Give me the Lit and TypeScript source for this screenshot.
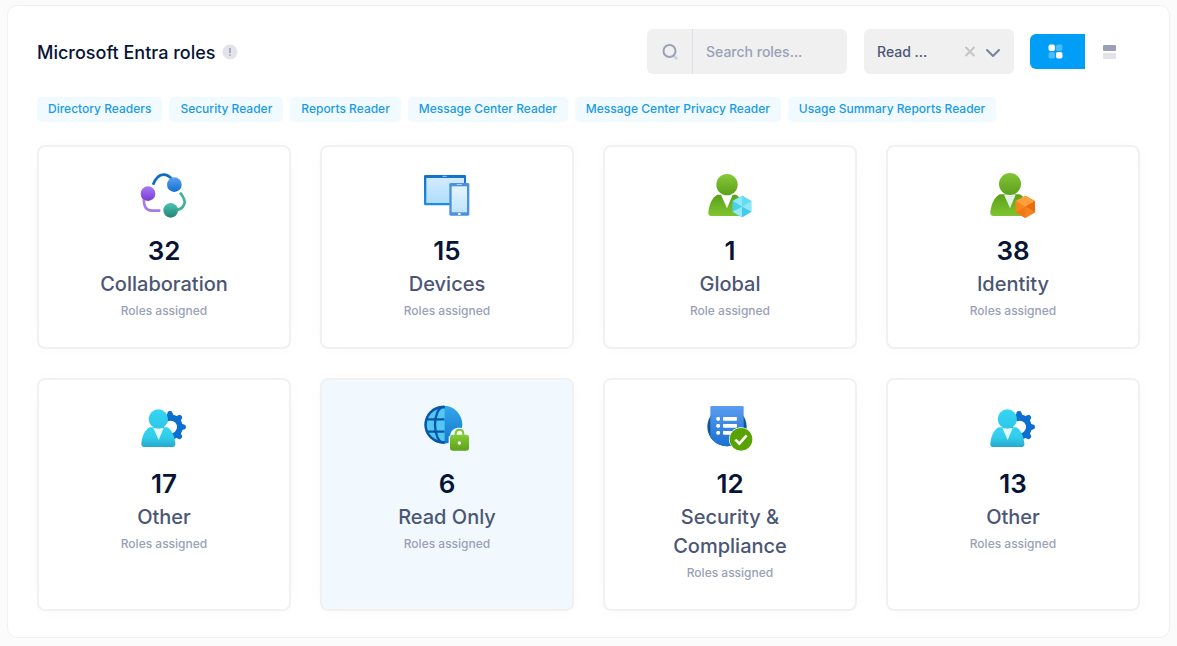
import { LitElement, html, css, svg, TemplateResult } from "lit";
import { customElement, property, state } from "lit/decorators.js";

const gear = Array.from(
  { length: 8 },
  (_, i) => svg`<path d="M109 68l4-13q1-4 7-4t7 4l4 13z" fill="#0c6fd0" transform="rotate(${i * 45} 120 99)" />`
);

const icons: Record<string, TemplateResult> = {
  collaboration: html`<svg viewBox="30 33 144 144" width="48" height="48" aria-hidden="true">
    <defs>
      <linearGradient id="a" x2="0" y2="1"><stop stop-color="#5ea0ef" /><stop offset="1" stop-color="#0f6fd0" /></linearGradient>
      <linearGradient id="b" x2="0" y2="1"><stop stop-color="#a67af4" /><stop offset="1" stop-color="#7a3ad6" /></linearGradient>
      <linearGradient id="c" x2="0" y2="1"><stop stop-color="#49c5b1" /><stop offset="1" stop-color="#258277" /></linearGradient>
    </defs>
    <g fill="none" stroke-width="8">
      <path d="M69 74C76 57 84 45 99 44c10-1 18 4 26 12" stroke="#0b6fc8" />
      <path d="M42 113c-2 22 4 39 24 39h25" stroke="#a57be6" />
      <path d="M150 98c10 12 17 22 13 34-4 11-14 18-28 18" stroke="#3fb396" />
    </g>
    <circle cx="133" cy="74" r="22" fill="url(#a)" />
    <circle cx="54" cy="101" r="22" fill="url(#b)" />
    <circle cx="122" cy="151" r="22" fill="url(#c)" />
  </svg>`,
  devices: html`<svg viewBox="33 33 144 144" width="48" height="48" aria-hidden="true">
    <defs>
      <linearGradient id="a" x2="0" y2="1"><stop stop-color="#d2ebff" /><stop offset="1" stop-color="#b0dcfc" /></linearGradient>
      <linearGradient id="b" x2="0" y2="1"><stop stop-color="#e4f5ff" /><stop offset="1" stop-color="#bfe4fd" /></linearGradient>
      <linearGradient id="c" x2="0" y2="1"><stop stop-color="#1173c6" /><stop offset="1" stop-color="#1b8fe2" /></linearGradient>
    </defs>
    <rect x="36" y="45" width="126" height="91" rx="4" fill="url(#c)" />
    <rect x="43" y="54" width="113" height="75" fill="url(#a)" />
    <rect x="91" y="47" width="14" height="4" rx="2" fill="#79bdf0" />
    <rect x="112" y="69" width="60" height="98" rx="4" fill="#4b90dd" />
    <rect x="119" y="79" width="46" height="78" fill="url(#b)" />
    <rect x="134" y="72" width="16" height="3" rx="1" fill="#a7d4f8" />
    <rect x="138" y="159" width="8" height="6" rx="2" fill="#fff" />
  </svg>`,
  global: html`<svg viewBox="33 33 144 144" width="48" height="48" aria-hidden="true">
    <defs>
      <linearGradient id="a" x2="0" y2="1"><stop stop-color="#86c938" /><stop offset="1" stop-color="#5da01b" /></linearGradient>
      <linearGradient id="b" x2="0" y2="1"><stop stop-color="#5c9f1c" /><stop offset="1" stop-color="#7fc52f" /></linearGradient>
    </defs>
    <path d="M50 168c-7 0-11-4-10-11 3-27 12-45 27-53h56c13 7 22 26 25 53 1 7-3 11-10 11z" fill="url(#b)" />
    <path d="M78 104h35l-17 41z" fill="#fff" />
    <circle cx="96" cy="74" r="34" fill="#fff" />
    <circle cx="96" cy="74" r="32" fill="url(#a)" />
    <path d="M141 107l28 16v32l-28 17-28-17v-32z" fill="#54d8f0" />
    <path d="M141 107v33l-28-17z" fill="#8be9fa" />
    <path d="M141 107v33l28-17z" fill="#63dcf1" />
    <path d="M113 123l28 17-28 15z" fill="#48cfe9" />
    <path d="M169 123l-28 17 28 15z" fill="#8ee8f8" />
    <path d="M113 155l28-15v32z" fill="#94eafa" />
    <path d="M169 155l-28-15v32z" fill="#45c9e4" />
  </svg>`,
  identity: html`<svg viewBox="33 33 144 144" width="48" height="48" aria-hidden="true">
    <defs>
      <linearGradient id="a" x2="0" y2="1"><stop stop-color="#83c536" /><stop offset="1" stop-color="#5c9f1c" /></linearGradient>
      <linearGradient id="b" x2="0" y2="1"><stop stop-color="#5c9f1c" /><stop offset="1" stop-color="#7fc52f" /></linearGradient>
    </defs>
    <path d="M47 168c-7 0-11-4-10-11 3-27 13-46 28-54h61c14 8 23 27 26 54 1 7-3 11-10 11z" fill="url(#b)" />
    <path d="M78 104h35l-17 41z" fill="#dff3e4" />
    <circle cx="96" cy="72" r="34" fill="#fff" />
    <circle cx="96" cy="72" r="33" fill="url(#a)" />
    <path d="M142 107l29 16v34l-29 17-29-17v-34z" fill="#f78d1e" />
    <path d="M142 107l29 16-29 17-29-17z" fill="#fba03a" />
    <path d="M142 140l29-17v34z" fill="#ec6a10" />
    <path d="M142 140v34l29-17z" fill="#f58220" />
    <path d="M113 123l29 17-29 17z" fill="#f7871b" />
    <path d="M113 157l29-17v34z" fill="#f07818" />
  </svg>`,
  other: html`<svg viewBox="30 30 144 144" width="48" height="48" aria-hidden="true">
    <defs>
      <linearGradient id="a" x2="0" y2="1"><stop stop-color="#35d6f3" /><stop offset="1" stop-color="#2fc6ea" /></linearGradient>
      <linearGradient id="b" x2="0" y2="1"><stop stop-color="#35d4f2" /><stop offset=".5" stop-color="#32cdec" /><stop offset="1" stop-color="#27a9cf" /></linearGradient>
    </defs>
    ${gear}
    <circle cx="120" cy="99" r="28" fill="none" stroke="#0c6fd0" stroke-width="20" />
    <circle cx="122" cy="99" r="19" fill="#fff" />
    <path d="M43 159c-7 0-10-4-9-11 3-25 11-40 25-48h53c13 8 21 23 24 48 1 7-2 11-9 11z" fill="url(#b)" />
    <path d="M70 102h31l-15 36z" fill="#e2f9fd" />
    <circle cx="85" cy="75" r="29" fill="url(#a)" />
  </svg>`,
  readonly: html`<svg viewBox="33 30 144 144" width="48" height="48" aria-hidden="true">
    <defs>
      <linearGradient id="a" x2="0" y2="1"><stop stop-color="#35a7e8" /><stop offset="1" stop-color="#0f78cf" /></linearGradient>
      <linearGradient id="b" x2="0" y2="1"><stop stop-color="#85cb35" /><stop offset="1" stop-color="#5ca21b" /></linearGradient>
      <clipPath id="c"><path d="M98 30H30v130h68z" /></clipPath>
    </defs>
    <circle cx="94" cy="92" r="57" fill="url(#a)" />
    <g clip-path="url(#c)">
      <circle cx="94" cy="92" r="54" fill="#50c8f2" />
      <g fill="none" stroke="#0a57a8" stroke-width="7">
        <circle cx="94" cy="92" r="53" />
        <ellipse cx="94" cy="92" rx="25" ry="53" />
        <path d="M44 76h54M44 113h54" />
      </g>
    </g>
    <path d="M115 124c0-30 54-30 54 0l7 4v46h-66v-46z" fill="#f1f9ff" />
    <path d="M131 126v-6c0-17 23-17 23 0v6" fill="none" stroke="#7fc531" stroke-width="6" />
    <rect x="114" y="122" width="57" height="48" rx="9" fill="url(#b)" />
    <circle cx="142" cy="147" r="5" fill="#fff" />
  </svg>`,
  security: html`<svg viewBox="33 30 144 144" width="48" height="48" aria-hidden="true">
    <defs>
      <linearGradient id="a" x2="0" y2="1"><stop stop-color="#5a9df0" /><stop offset="1" stop-color="#1a70d2" /></linearGradient>
    </defs>
    <circle cx="96" cy="98" r="59" fill="#0b5798" />
    <path d="M46 40q0-4 4-4h92q4 0 4 4v89a59 59 0 0 1-100 0z" fill="url(#a)" />
    <g fill="#fff">
      <rect x="64" y="69" width="11" height="11" rx="4" /><rect x="84" y="69" width="42" height="11" rx="2" />
      <rect x="64" y="90" width="11" height="11" rx="4" /><rect x="84" y="90" width="42" height="11" rx="2" />
      <rect x="64" y="111" width="11" height="11" rx="4" /><rect x="84" y="111" width="42" height="11" rx="2" />
    </g>
    <circle cx="138" cy="136" r="36" fill="#fff" />
    <circle cx="138" cy="136" r="34" fill="#57a300" />
    <path d="M121 137l12 12 22-25" fill="none" stroke="#fff" stroke-width="8" />
  </svg>`,
};

interface Category {
  icon: string;
  count: number;
  name: string;
}

const categories: Category[] = [
  { icon: "collaboration", count: 32, name: "Collaboration" },
  { icon: "devices", count: 15, name: "Devices" },
  { icon: "global", count: 1, name: "Global" },
  { icon: "identity", count: 38, name: "Identity" },
  { icon: "other", count: 17, name: "Other" },
  { icon: "readonly", count: 6, name: "Read Only" },
  { icon: "security", count: 12, name: "Security & Compliance" },
  { icon: "other", count: 13, name: "Other" },
];

const roles = [
  "Directory Readers",
  "Security Reader",
  "Reports Reader",
  "Message Center Reader",
  "Message Center Privacy Reader",
  "Usage Summary Reports Reader",
];

@customElement("role-card")
class RoleCard extends LitElement {
  @property({ attribute: false }) category!: Category;
  @property({ type: Boolean, reflect: true }) selected = false;

  static styles = css`
    :host {
      display: flex;
      flex-direction: column;
      align-items: center;
      box-sizing: border-box;
      padding: 24px 40px 26px;
      border: 2px solid #f1f1f2;
      border-radius: 8px;
      background: #fff;
      box-shadow: 0 0 20px rgba(76, 87, 125, 0.02);
      text-align: center;
      cursor: pointer;
    }
    :host([selected]) {
      background: #f1f9ff;
    }
    svg {
      display: block;
    }
    .count {
      margin-top: 14px;
      font-size: 26px;
      line-height: 36px;
      font-weight: 600;
      color: #071437;
    }
    .name {
      margin: 1px 0 2px;
      font-size: 20px;
      line-height: 29px;
      font-weight: 500;
      color: #4b5675;
    }
    .note {
      font-size: 12px;
      line-height: 20px;
      font-weight: 500;
      color: #99a1b7;
    }
  `;

  render() {
    const { icon, count, name } = this.category;
    return html`
      ${icons[icon]}
      <div class="count">${count}</div>
      <div class="name">${name}</div>
      <div class="note">${count === 1 ? "Role assigned" : "Roles assigned"}</div>
    `;
  }
}

@customElement("app-root")
class AppRoot extends LitElement {
  @state() private selected = 5;

  static styles = css`
    :host {
      display: block;
      box-sizing: border-box;
      min-height: 100vh;
      padding: 5px 7px 8px;
      background: #fbfbfb;
      font-family: Inter, sans-serif;
      color: #071437;
    }
    .panel {
      padding: 23px 29px 26px;
      border: 1px solid #f1f1f2;
      border-radius: 10px;
      background: #fff;
    }
    .header,
    .title,
    .tools,
    .views,
    .search,
    .filter {
      display: flex;
      align-items: center;
    }
    .header {
      justify-content: space-between;
      gap: 16px;
    }
    .title {
      gap: 6px;
    }
    h1 {
      margin: 0;
      padding-top: 2px;
      font-size: 18px;
      line-height: 24px;
      font-weight: 500;
    }
    svg {
      display: block;
      flex: none;
    }
    button {
      padding: 0;
      border: 0;
      background: none;
      font: inherit;
      cursor: pointer;
    }
    .tools {
      gap: 16px;
    }
    .search,
    .filter {
      height: 45px;
      border-radius: 6px;
      background: #f0f0f0;
      font-size: 14px;
      font-weight: 500;
    }
    .search {
      width: 200px;
      margin-right: 1px;
    }
    .search label {
      display: flex;
      align-items: center;
      justify-content: center;
      align-self: stretch;
      width: 45px;
      border-right: 1px solid #dbdfe9;
    }
    input,
    select {
      flex: 1;
      min-width: 0;
      align-self: stretch;
      border: 0;
      outline: 0;
      background: none;
      font: inherit;
      color: #4b5675;
      padding: 0 13px;
    }
    input::placeholder {
      color: #99a1b7;
      opacity: 1;
    }
    .filter {
      width: 150px;
      padding-right: 12px;
      box-sizing: border-box;
      gap: 8px;
    }
    select {
      appearance: none;
      padding: 0 0 0 13px;
    }
    .views button {
      display: flex;
      align-items: center;
      justify-content: center;
      box-sizing: border-box;
      width: 55px;
      height: 35px;
      padding-right: 5px;
      border-radius: 0 6px 6px 0;
    }
    .views .active {
      border-radius: 6px 0 0 6px;
      background: #009ef7;
    }
    .roles {
      display: flex;
      flex-wrap: wrap;
      gap: 7px;
      margin: 23px 0;
      padding: 0;
      list-style: none;
    }
    .roles li {
      padding: 0 11px 1px;
      border-radius: 5px;
      background: #f1faff;
      font-size: 12px;
      line-height: 24px;
      font-weight: 500;
      color: #1b9ae5;
    }
    .grid {
      display: grid;
      grid-template-columns: repeat(4, minmax(0, 1fr));
      gap: 29px;
    }
  `;

  render() {
    return html`
      <main class="panel">
        <header class="header">
          <div class="title">
            <h1>Microsoft Entra roles</h1>
            <svg width="16" height="18" viewBox="0 0 16 18" aria-hidden="true">
              <circle cx="8" cy="9" r="6" fill="#e3e4ea" />
              <circle cx="8" cy="9" r="6" fill="none" stroke="#e3e4ea" stroke-width="3" stroke-dasharray="3.2 1.5" stroke-linecap="round" />
              <path d="M8 5v5M8 11.200v1.600" stroke="#99a1b7" stroke-width="1.600" />
            </svg>
          </div>
          <div class="tools">
            <div class="search">
              <label for="search" aria-label="Search roles">
                <svg width="16" height="16" viewBox="0 0 16 16">
                  <path d="M12 12l2.500 2.500" stroke="#d0d3df" stroke-width="2.500" stroke-linecap="round" />
                  <circle cx="7.500" cy="7" r="6" fill="none" stroke="#99a1b7" stroke-width="2" />
                </svg>
              </label>
              <input id="search" type="text" placeholder="Search roles..." />
            </div>
            <div class="filter">
              <select aria-label="Role category">
                <option>Read ...</option>
              </select>
              <button aria-label="Clear filter">
                <svg width="12" height="12" viewBox="0 0 12 12">
                  <path d="M1.500 1l9 9M10.500 1l-9 9" stroke="#c4c4c4" stroke-width="2" />
                </svg>
              </button>
              <svg width="18" height="16" viewBox="0 0 18 16" aria-hidden="true">
                <path d="M3 6l6 6L15 6" fill="none" stroke="#78829d" stroke-width="2" stroke-linecap="round" stroke-linejoin="round" />
              </svg>
            </div>
            <div class="views">
              <button class="active" aria-label="Grid view" aria-pressed="true">
                <svg width="15" height="15" viewBox="0 0 15 15" fill="#fff">
                  <rect x=".5" y=".5" width="6.500" height="6.500" rx="2" />
                  <rect x="8" y=".5" width="6.500" height="6.500" rx="2" opacity=".3" />
                  <rect x=".5" y="8" width="6.500" height="6.500" rx="2" opacity=".3" />
                  <rect x="8" y="8" width="6.500" height="6.500" rx="2" />
                </svg>
              </button>
              <button aria-label="List view" aria-pressed="false">
                <svg width="14" height="14" viewBox="0 0 14 14">
                  <rect width="13" height="6" rx="1" fill="#99a1b7" />
                  <rect y="8" width="13" height="6" rx="1" fill="#e1e3e9" />
                </svg>
              </button>
            </div>
          </div>
        </header>
        <ul class="roles">
          ${roles.map((role) => html`<li>${role}</li>`)}
        </ul>
        <section class="grid">
          ${categories.map(
            (category, i) => html`<role-card
              .category=${category}
              ?selected=${i === this.selected}
              @click=${() => (this.selected = i)}
            ></role-card>`
          )}
        </section>
      </main>
    `;
  }
}
